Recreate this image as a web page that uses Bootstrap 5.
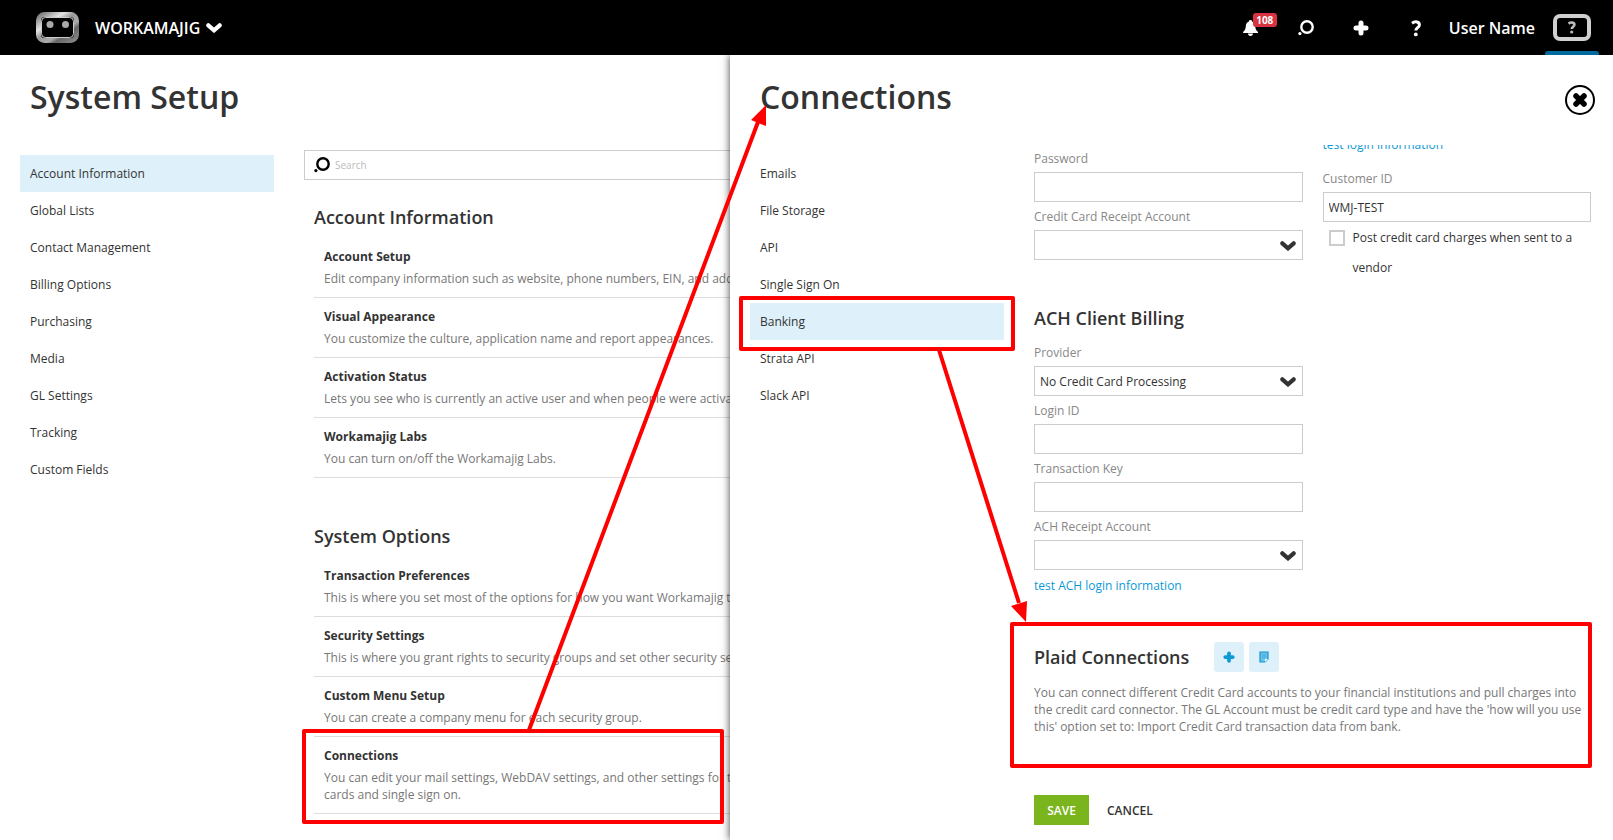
<!DOCTYPE html>
<html lang="en">
<head>
<meta charset="utf-8">
<meta name="viewport" content="width=device-width, initial-scale=1">
<title>System Setup</title>
<link href="https://cdn.jsdelivr.net/npm/bootstrap@5.3.0/dist/css/bootstrap.min.css" rel="stylesheet">
<style>
  body { font-family: "Open Sans", "Noto Sans", sans-serif; font-size: 12px; line-height: 17px; color: #333; background: #fff; min-height: 100vh; overflow: hidden; }
  .topbar { height: 55px; background: #000; color: #fff; font-size: 16px; font-weight: 600; line-height: 24px; padding: 0 22px 0 36px; }
  .topbar button, .topbar a { color: #fff; background: none; border: 0; padding: 0; font-weight: 600; text-decoration: none; }
  .topbar svg, .tool svg, .close-btn svg { display: block; }
  .brand-btn { margin-left: 16px; gap: 6px; }
  .icon-btn { width: 16px; margin-right: 39px; }
  .topbar .help-btn { margin-right: 25px; }
  .count { left: 10px; top: -7px; width: 24px; height: 14px; border-radius: 3px; background: #d9333f; font-size: 10px; line-height: 14px; font-weight: 700; padding: 0; }
  .user-tab { height: 55px; margin-left: 18px; }
  .user-tab::after { content: ""; left: -8px; right: -8px; bottom: 0; height: 4px; background: #006b9d; border-radius: 3px 3px 0 0; position: absolute; }
  .workspace { min-height: calc(100vh - 55px); }
  .setup { flex: 0 0 730px; overflow: hidden; }
  .setup-main { flex: 0 0 auto; width: 530px; }
  .pane-title { font-size: 32px; line-height: 40px; font-weight: 600; margin: 0; padding: 22px 30px 0; height: 90px; color: #333; }
  .side { flex: 0 0 254px; margin-left: 20px; padding-top: 10px; }
  .side a { color: #333; text-decoration: none; height: 37px; line-height: 36px; padding: 1px 10px 0; display: block; position: relative; }
  .side a.active { background: #def0fa; }
  .search-box { height: 30px; border: 1px solid #ccc; margin: 5px 0 0 30px; padding: 0 9px; gap: 5px; }
  .search-box input { border: 0; outline: 0; font-size: 10px; padding: 0; flex: 1; background: none; }
  .search-box input::placeholder { color: #bbb; opacity: 1; }
  .group-title { font-size: 18px; line-height: 24px; font-weight: 600; margin: 0; color: #333; }
  .group { margin-left: 40px; padding-top: 25px; width: 500px; }
  .group + .group { padding-top: 46px; }
  .option { padding: 10px; border-bottom: 1px solid #ddd; color: #777; position: relative; }
  .option strong { display: block; color: #333; margin-bottom: 5px; font-weight: 700; }
  .options { padding-top: 9px; }
  .panel { background: #fff; box-shadow: 0 0 8px rgba(0,0,0,.75); position: relative; z-index: 2; clip-path: inset(0 0 0 -12px); }
  .close-btn { background: none; border: 0; padding: 0; margin: 30px 18px 0 0; }
  .form-area { margin: 0 22px 0 30px; min-width: 0; }
  .scroller { overflow: hidden; }
  .cols { gap: 20px; }
  .cols > div { flex: 1 1 0; min-width: 0; }
  .first-cols { margin-top: -1px; }
  .field label { display: block; height: 28px; line-height: 30px; color: #888; }
  .field input, .field select { display: block; width: 100%; height: 30px; border: 1px solid #ccc; border-radius: 0; padding: 0 5px; background: #fff; color: #333; appearance: none; outline: 0; font-size: 12px; }
  .pick { position: relative; }
  .pick svg { position: absolute; right: 7px; top: 11px; pointer-events: none; }
  .cut { margin-top: -13px; padding-bottom: 5px; }
  .cut a, .test-link a { color: #0d99d6; text-decoration: none; line-height: 28px; display: block; }
  .post { line-height: 30px; gap: 8px; padding: 1px 0 0 6px; }
  .post input { appearance: none; width: 16px; height: 16px; border: 2px solid #ccc; margin: 7px 0 0; flex: none; background: #fff; }
  .ach .group-title { padding: 23px 0 8px; }
  .test-link { padding-top: 2px; height: 62px; }
  .plaid { position: relative; padding-top: 10px; height: 136px; color: #777; }
  .plaid-head { gap: 5px; height: 30px; }
  .plaid-head .group-title { margin-right: 20px; }
  .plaid p { margin: 12px -2px 0 0; }
  .tool { width: 30px; height: 30px; border: 0; border-radius: 3px; background: #def0fa; padding: 0; display: grid; place-items: center; }
  .actions { padding-top: 27px; gap: 18px; }
  .actions button { height: 30px; font-size: 12px; font-weight: 600; border: 0; padding: 0; background: none; color: #333; }
  .actions .save { width: 55px; background: #7ab51d; color: #fff; }
  .callout { position: absolute; border: 4px solid #f00; border-radius: 2px; pointer-events: none; z-index: 3; }
  .on-option { left: -12px; right: 90px; top: -8px; bottom: -11px; }
  .on-side { left: -11px; right: -11px; top: -7px; bottom: -11px; }
  .on-plaid { left: -24px; right: -1px; top: -10px; bottom: 0; }
  .arrows { position: absolute; left: 0; top: 0; z-index: 4; pointer-events: none; }
</style>
</head>
<body>
<svg width="0" height="0" class="position-absolute" aria-hidden="true">
  <symbol id="chev" viewBox="0 0 16 10"><path d="M2.3 2.3 8 7.3l5.700-5" fill="none" stroke="currentColor" stroke-width="4.200" stroke-linecap="round"/></symbol>
  <symbol id="glass" viewBox="0 0 16 16"><circle cx="9" cy="7" r="5.700" fill="none" stroke="currentColor" stroke-width="2.400"/><circle cx="1.900" cy="13.600" r="1.600" fill="currentColor"/></symbol>
  <symbol id="plus" viewBox="0 0 16 16"><path d="M8 3v10M3 8h10" fill="none" stroke="currentColor" stroke-width="5" stroke-linecap="round"/></symbol>
</svg>

<header class="topbar d-flex align-items-center">
  <a href="#" aria-label="Home">
    <svg width="43" height="31" viewBox="0 0 43 31">
      <defs><linearGradient id="steel" x1="0" y1="0" x2="1" y2="1"><stop offset="0" stop-color="#777"/><stop offset=".3" stop-color="#e4e4e4"/><stop offset=".45" stop-color="#999"/><stop offset=".65" stop-color="#aaa"/><stop offset=".75" stop-color="#666"/><stop offset="1" stop-color="#888"/></linearGradient></defs>
      <rect x="2.500" y="2.500" width="38" height="26" rx="6" fill="#000" stroke="url(#steel)" stroke-width="5"/>
      <rect x="5.500" y="5.500" width="32" height="20" rx="4" fill="none" stroke="#ccc"/>
      <circle cx="14" cy="12.500" r="3.500" fill="#aaa"/><circle cx="29.500" cy="12.500" r="3.500" fill="#aaa"/>
    </svg>
  </a>
  <button class="brand-btn d-flex align-items-center">WORKAMAJIG <svg width="16" height="10"><use href="#chev"/></svg></button>
  <nav class="ms-auto d-flex align-items-center">
    <button class="icon-btn position-relative" aria-label="Notifications">
      <svg width="16" height="16" viewBox="0 0 16 16" fill="#fff"><path d="M7.500 0c1 0 1.500.6 1.600 1.400 2 .7 2.900 2.300 3.100 4.800.2 2.800 1 4 2.600 5.600.5.600.2 1.200-.5 1.200H.8c-.7 0-1-.6-.5-1.200C1.900 10.200 2.600 9 2.800 6.200c.2-2.500 1.100-4.100 3.100-4.800C6 .6 6.500 0 7.500 0zM5 13.500h5c0 1.500-1 2.500-2.500 2.500S5 15 5 13.500z"/></svg>
      <span class="badge count position-absolute">108</span>
    </button>
    <button class="icon-btn" aria-label="Search"><svg width="16" height="16"><use href="#glass"/></svg></button>
    <button class="icon-btn" aria-label="Add"><svg width="16" height="16"><use href="#plus"/></svg></button>
    <button class="icon-btn help-btn" aria-label="Help"><svg width="16" height="18" viewBox="0 0 16 18"><path d="M4 4.200C7 2 11.600 2.400 11.400 6c-.1 2.600-3.600 2.700-3.600 5.500" fill="none" stroke="#fff" stroke-width="3"/><circle cx="7.800" cy="15.400" r="1.900" fill="#fff"/></svg></button>
    <a href="#">User Name</a>
    <a href="#" class="user-tab d-flex align-items-center position-relative" aria-label="Profile">
      <svg width="38" height="27" viewBox="0 0 38 27"><rect x="2" y="2" width="34" height="23" rx="5" fill="#000" stroke="#d0d0d0" stroke-width="4"/><path d="M15.500 9.600c2.200-1.600 5.900-1.400 5.900 1.100 0 2.100-2.600 2.200-2.600 4.300" fill="none" stroke="#bbb" stroke-width="2.600"/><circle cx="18.700" cy="18" r="1.600" fill="#bbb"/></svg>
    </a>
  </nav>
</header>

<main class="workspace d-flex">
  <section class="setup">
    <h1 class="pane-title">System Setup</h1>
    <div class="d-flex">
      <nav class="side">
        <a href="#" class="active">Account Information</a>
        <a href="#">Global Lists</a>
        <a href="#">Contact Management</a>
        <a href="#">Billing Options</a>
        <a href="#">Purchasing</a>
        <a href="#">Media</a>
        <a href="#">GL Settings</a>
        <a href="#">Tracking</a>
        <a href="#">Custom Fields</a>
      </nav>
      <div class="setup-main">
        <label class="search-box d-flex align-items-center"><svg width="16" height="16" color="#000"><use href="#glass"/></svg><input type="search" placeholder="Search" aria-label="Search"></label>
        <section class="group">
          <h2 class="group-title">Account Information</h2>
          <div class="options">
            <div class="option"><strong>Account Setup</strong>Edit company information such as website, phone numbers, EIN, and address.</div>
            <div class="option"><strong>Visual Appearance</strong>You customize the culture, application name and report appearances.</div>
            <div class="option"><strong>Activation Status</strong>Lets you see who is currently an active user and when people were activated.</div>
            <div class="option"><strong>Workamajig Labs</strong>You can turn on/off the Workamajig Labs.</div>
          </div>
        </section>
        <section class="group">
          <h2 class="group-title">System Options</h2>
          <div class="options">
            <div class="option"><strong>Transaction Preferences</strong>This is where you set most of the options for how you want Workamajig to work.</div>
            <div class="option"><strong>Security Settings</strong>This is where you grant rights to security groups and set other security settings.</div>
            <div class="option"><strong>Custom Menu Setup</strong>You can create a company menu for each security group.</div>
            <div class="option"><strong>Connections</strong>You can edit your mail settings, WebDAV settings, and other settings for the credit cards and single sign on.<span class="callout on-option"></span></div>
          </div>
        </section>
      </div>
    </div>
  </section>

  <section class="panel flex-fill">
    <div class="d-flex justify-content-between align-items-start">
      <h1 class="pane-title">Connections</h1>
      <button class="close-btn" aria-label="Close"><svg width="30" height="30" viewBox="0 0 30 30"><circle cx="15" cy="15" r="14" fill="#fff" stroke="#000" stroke-width="2"/><path d="m11 11 8 8m0-8-8 8" stroke="#000" stroke-width="5.500" stroke-linecap="round"/></svg></button>
    </div>
    <div class="d-flex">
      <nav class="side">
        <a href="#">Emails</a>
        <a href="#">File Storage</a>
        <a href="#">API</a>
        <a href="#">Single Sign On</a>
        <a href="#" class="active">Banking<span class="callout on-side"></span></a>
        <a href="#">Strata API</a>
        <a href="#">Slack API</a>
      </nav>
      <form class="form-area flex-fill">
        <div class="scroller">
          <div class="cols first-cols d-flex">
            <div>
              <div class="field"><label for="pw">Password</label><input id="pw" type="password"></div>
              <div class="field"><label for="ccacct">Credit Card Receipt Account</label><div class="pick"><select id="ccacct"><option></option></select><svg width="16" height="10"><use href="#chev"/></svg></div></div>
            </div>
            <div>
              <div class="cut"><a href="#">test login information</a></div>
              <div class="field"><label for="cust">Customer ID</label><input id="cust" type="text" value="WMJ-TEST"></div>
              <label class="post d-flex align-items-start"><input type="checkbox"><span>Post credit card charges when sent to a vendor</span></label>
            </div>
          </div>
        </div>
        <div class="cols d-flex">
          <div class="ach">
            <h2 class="group-title">ACH Client Billing</h2>
            <div class="field"><label for="prov">Provider</label><div class="pick"><select id="prov"><option>No Credit Card Processing</option></select><svg width="16" height="10"><use href="#chev"/></svg></div></div>
            <div class="field"><label for="login">Login ID</label><input id="login" type="text"></div>
            <div class="field"><label for="tkey">Transaction Key</label><input id="tkey" type="text"></div>
            <div class="field"><label for="achacct">ACH Receipt Account</label><div class="pick"><select id="achacct"><option></option></select><svg width="16" height="10"><use href="#chev"/></svg></div></div>
            <div class="test-link"><a href="#">test ACH login information</a></div>
          </div>
          <div></div>
        </div>
        <section class="plaid">
          <div class="plaid-head d-flex align-items-center">
            <h2 class="group-title">Plaid Connections</h2>
            <button type="button" class="tool" aria-label="Add connection"><svg width="12" height="12" color="#0d99d6"><use href="#plus"/></svg></button>
            <button type="button" class="tool" aria-label="View log"><svg width="12" height="12" viewBox="0 0 12 12"><path d="M2 1h8v7l-3 3H2z" fill="#6cc0e6" stroke="#0d99d6" stroke-width="1.200"/><path d="M4 4h4M4 6h4" stroke="#3aabdc"/><path d="M7 11V8h3z" fill="#fff"/></svg></button>
          </div>
          <p>You can connect different Credit Card accounts to your financial institutions and pull charges into the credit card connector. The GL Account must be credit card type and have the 'how will you use this' option set to: Import Credit Card transaction data from bank.</p>
          <span class="callout on-plaid"></span>
        </section>
        <div class="actions d-flex">
          <button type="submit" class="save">SAVE</button>
          <button type="button">CANCEL</button>
        </div>
      </form>
    </div>
  </section>
</main>

<svg class="arrows" width="1100" height="800" fill="#f00" stroke="#f00" aria-hidden="true">
  <path d="M529 730 758 122M939 350l80 253" stroke-width="4" fill="none"/>
  <path d="m766 105-15 15 15 6zM1026 622l-15-16 16-5z" stroke="none"/>
</svg>
<script src="https://cdn.jsdelivr.net/npm/bootstrap@5.3.0/dist/js/bootstrap.bundle.min.js"></script>
</body>
</html>
